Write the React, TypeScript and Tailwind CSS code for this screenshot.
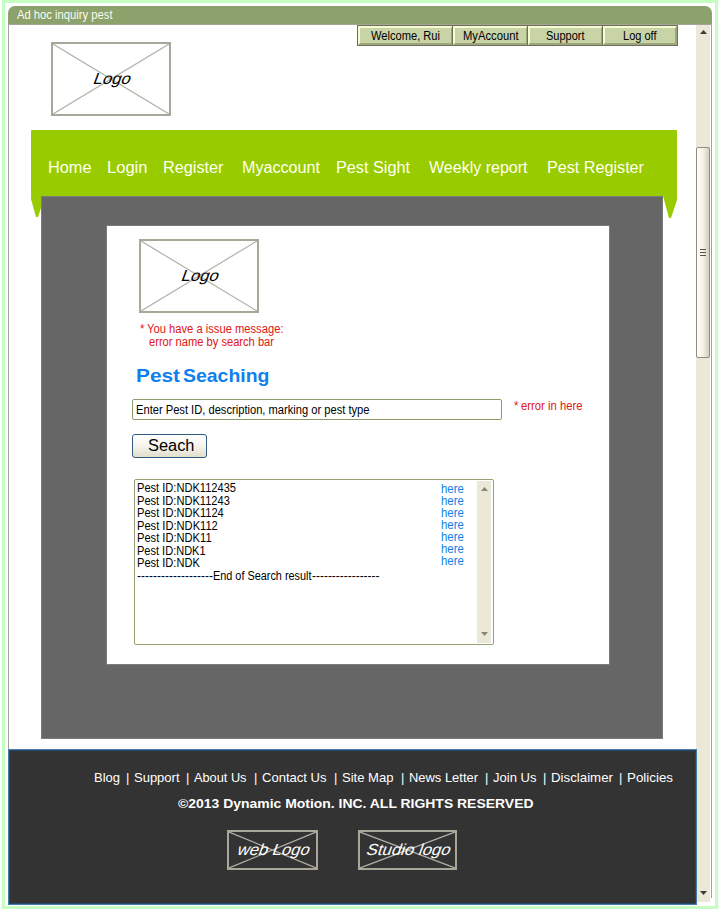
import React, { useLayoutEffect, useRef, useState } from "react";

/** A single line of text, condensed or stretched to an exact width. */
function Fit({
  w,
  children,
  className = "",
  skew = 0,
}: {
  w: number;
  children: string;
  className?: string;
  skew?: number;
}) {
  const ref = useRef<HTMLSpanElement>(null);
  const [scale, setScale] = useState(1);
  useLayoutEffect(() => {
    const el = ref.current;
    if (!el) return;
    const old = el.style.transform;
    el.style.transform = "none";
    const natural = el.getBoundingClientRect().width;
    el.style.transform = old;
    if (natural > 0) setScale(w / natural);
  }, [w, children]);
  return (
    <span className={`block shrink-0 whitespace-pre ${className}`} style={{ width: w }}>
      <span
        ref={ref}
        className="inline-block origin-left align-top"
        style={{ transform: `skewX(${-skew}deg) scaleX(${scale})` }}
      >
        {children}
      </span>
    </span>
  );
}

function LogoBox({ label, w, className }: { label: string; w: number; className: string }) {
  return (
    <div className={`relative flex shrink-0 items-center justify-center border-2 border-[#a9a799] ${className}`}>
      <svg className="absolute inset-0 h-full w-full" viewBox="0 0 100 100" preserveAspectRatio="none">
        <path d="M0 0L100 100M100 0L0 100" stroke="#b3b1a6" strokeWidth="1.2" vectorEffect="non-scaling-stroke" fill="none" />
      </svg>
      <div className="relative pl-[3px] text-[16px] leading-5">
        <Fit w={w} skew={20}>{label}</Fit>
      </div>
    </div>
  );
}

function Arrow({ down = false, color }: { down?: boolean; color: string }) {
  return (
    <svg width="7" height="4" viewBox="0 0 7 4" className={down ? "rotate-180" : ""}>
      <path d="M3.5 0L7 4H0Z" fill={color} />
    </svg>
  );
}

const account = [
  { t: "Welcome, Rui", w: 69, box: "w-[95px]" },
  { t: "MyAccount", w: 55.5, box: "w-[75px]" },
  { t: "Support", w: 38.5, box: "w-[75px]" },
  { t: "Log off", w: 33.5, box: "w-[74px]" },
];

const nav = [
  { t: "Home", w: 43.5, m: "ml-[17px]" },
  { t: "Login", w: 40.5, m: "ml-[15px]" },
  { t: "Register", w: 60.5, m: "ml-[16px]" },
  { t: "Myaccount", w: 78, m: "ml-[18px]" },
  { t: "Pest Sight", w: 74, m: "ml-[16px]" },
  { t: "Weekly report", w: 98.5, m: "ml-[19px]" },
  { t: "Pest Register", w: 97, m: "ml-[20px]" },
];

const results = [
  { t: "Pest ID:NDK112435", w: 99 },
  { t: "Pest ID:NDK11243", w: 92.8 },
  { t: "Pest ID:NDK1124", w: 86.8 },
  { t: "Pest ID:NDK112", w: 80.8 },
  { t: "Pest ID:NDK11", w: 74.6 },
  { t: "Pest ID:NDK1", w: 68.6 },
  { t: "Pest ID:NDK", w: 62.8 },
];

const footer = [
  { t: "Blog", w: 26, cell: "w-[32px]" },
  { t: "Support", w: 45.5, cell: "w-[52px]" },
  { t: "About Us", w: 52.5, cell: "w-[60px]" },
  { t: "Contact Us", w: 64.5, cell: "w-[72px]" },
  { t: "Site Map", w: 51.5, cell: "w-[59px]" },
  { t: "News Letter", w: 69, cell: "w-[76px]" },
  { t: "Join Us", w: 43.5, cell: "w-[50px]" },
  { t: "Disclaimer", w: 62, cell: "w-[68px]" },
  { t: "Policies", w: 46, cell: "w-[46px]" },
];

export default function App() {
  return (
    <div className="h-[911px] w-[718px] overflow-hidden bg-white font-['Liberation_Sans',Arial,sans-serif] text-[12px] leading-4 text-black">
      <div className="ml-[2px] h-[909px] w-[716px] border-[3px] border-[#c5fdc3] pl-[3px] pt-[3px]">
        <div className="w-[704px]">
          <header className="h-[19px] rounded-t-[7px] border-b border-[#a5a595] bg-[#8ca16b] pl-[9px] pt-px text-[#fbfdf0]">
            <Fit w={95.5}>Ad hoc inquiry pest</Fit>
          </header>

          <div className="flex h-[880px]">
            <div className="flex w-[689px] shrink-0 flex-col">
              <main className="h-[724px] border-l border-[#a5a399]">
                <div className="flex h-[105px]">
                  <div className="pl-[42px] pt-[17px]">
                    <LogoBox label="Logo" w={37} className="h-[74px] w-[120px]" />
                  </div>
                  <div className="ml-[186px] flex h-[21px] border border-[#6e7058]">
                    {account.map((a, i) => (
                      <div
                        key={a.t}
                        className={`flex h-[19px] items-center justify-center border-2 border-b-[#9da77f] border-l-[#f5fbd2] border-r-[#9da77f] border-t-[#f5fbd2] bg-[#c8d3a6] pt-px ${a.box} ${i ? "shadow-[-1px_0_0_#6e7058]" : ""}`}
                      >
                        <Fit w={a.w}>{a.t}</Fit>
                      </div>
                    ))}
                  </div>
                </div>

                <nav className="relative ml-[22px] flex h-[66px] w-[646px] rounded-t-[1px] bg-[#99cc00] pt-[28px] text-[16px] leading-5 text-[#fffff0]">
                  {nav.map((n) => (
                    <Fit key={n.t} w={n.w} className={n.m}>
                      {n.t}
                    </Fit>
                  ))}
                  <svg className="absolute left-0 top-[66px]" width="646" height="22" viewBox="0 0 646 22">
                    <path d="M0 0H14L7 21H5L0 3ZM632 0H646V4L640 22H638Z" fill="#99cc00" />
                  </svg>
                </nav>

                <section className="relative ml-[32px] h-[543px] w-[622px] border border-[#7b7b7b] bg-[#666666] pl-[65px] pt-[29px]">
                  <div className="h-[438px] w-[502px] bg-white outline outline-1 outline-[#7b7b7b]">
                    <div className="pl-[32px] pt-[13px]">
                      <LogoBox label="Logo" w={37} className="h-[74px] w-[120px]" />
                    </div>
                    <div className="ml-[33px] mt-[10px] leading-[13px] text-[#e01515]">
                      <div className="flex">
                        <Fit w={4.5}>*</Fit>
                        <Fit w={136.5} className="ml-[2.5px]">You have a issue message:</Fit>
                      </div>
                      <Fit w={125} className="ml-[9px]">error name by search bar</Fit>
                    </div>
                    <h1 className="ml-[29px] mt-[15px] flex text-[19px] font-bold leading-[24px] text-[#1080ee]">
                      <Fit w={44}>Pest</Fit>
                      <Fit w={86.5} className="ml-[2.5px]">Seaching</Fit>
                    </h1>

                    <div className="ml-[25px] mt-[11px] flex">
                      <div className="h-[21px] w-[370px] rounded-[2px] border border-[#8b9c6c] pl-[3px] pt-[2px]">
                        <Fit w={233.5}>Enter Pest ID, description, marking or pest type</Fit>
                      </div>
                      <div className="-mt-px flex pl-[12px] text-[#e01515]">
                        <Fit w={4.5}>*</Fit>
                        <Fit w={61.5} className="ml-[2.5px]">error in here</Fit>
                      </div>
                    </div>

                    <button className="ml-[25px] mt-[14px] block h-[24px] w-[75px] rounded-[3px] border border-[#315b83] bg-gradient-to-b from-white via-[#f6f4ec] to-[#e2dece] pl-[14px] text-[16px] leading-5">
                      <Fit w={46.5}>Seach</Fit>
                    </button>

                    <div className="ml-[27px] mt-[21px] flex h-[166px] w-[360px] rounded-[2px] border border-[#93a272] pl-[2px]">
                      <div className="w-[304px] pt-[2px] leading-[12.5px]">
                        {results.map((r) => (
                          <Fit key={r.t} w={r.w}>
                            {r.t}
                          </Fit>
                        ))}
                        <div className="flex">
                          <Fit w={76}>-------------------</Fit>
                          <Fit w={98.5}>End of Search result</Fit>
                          <Fit w={67.5}>-----------------</Fit>
                        </div>
                      </div>
                      <div className="w-[36px] pt-[3px] leading-[12px] text-[#1080e0]">
                        {results.map((r) => (
                          <Fit key={r.t} w={22.8}>
                            here
                          </Fit>
                        ))}
                      </div>
                      <div className="mt-px flex h-[162px] w-[14px] flex-col items-center justify-between bg-[#ebe8d8] pb-[7px] pt-[6px]">
                        <Arrow color="#88867a" />
                        <Arrow down color="#88867a" />
                      </div>
                    </div>
                  </div>
                </section>
              </main>

              <footer className="relative z-10 h-[156px] border-2 border-[#24486b] bg-[#333333] text-[13px] text-white outline outline-1 -outline-offset-1 outline-[#467ba8]">
                <div className="ml-[84px] mt-[19px] flex">
                  {footer.map((f, i) => (
                    <React.Fragment key={f.t}>
                      <div className={`shrink-0 ${f.cell}`}>
                        <Fit w={f.w}>{f.t}</Fit>
                      </div>
                      {i < footer.length - 1 && <span className="w-[8px] shrink-0 leading-[15px]">|</span>}
                    </React.Fragment>
                  ))}
                </div>
                <div className="ml-[168px] mt-[10px] font-bold">
                  <Fit w={355.5}>©2013 Dynamic Motion. INC. ALL RIGHTS RESERVED</Fit>
                </div>
                <div className="ml-[217px] mt-[18px] flex gap-[40px]">
                  <LogoBox label="web Logo" w={72} className="h-[40px] w-[91px]" />
                  <LogoBox label="Studio logo" w={84} className="h-[40px] w-[99px]" />
                </div>
              </footer>
            </div>

            <div className="-ml-px flex h-[877px] w-[14px] shrink-0 flex-col items-center bg-[#ebe8d8]">
              <div className="h-[122px] pt-[5px]">
                <Arrow color="#3d3c36" />
              </div>
              <div className="flex h-[211px] w-[14px] flex-col items-center justify-center gap-[2px] rounded-[2px] border border-[#8f8c7c] bg-gradient-to-r from-[#fffef8] via-[#f3f1e6] to-[#d3cfbd]">
                <div className="h-px w-[6px] bg-[#55534a]" />
                <div className="h-px w-[6px] bg-[#55534a]" />
                <div className="h-px w-[6px] bg-[#55534a]" />
              </div>
              <div className="mt-auto pb-[7px]">
                <Arrow down color="#3d3c36" />
              </div>
            </div>
            <div className="ml-px h-[873px] w-px bg-[#a5a293]" />
          </div>
        </div>
      </div>
    </div>
  );
}
